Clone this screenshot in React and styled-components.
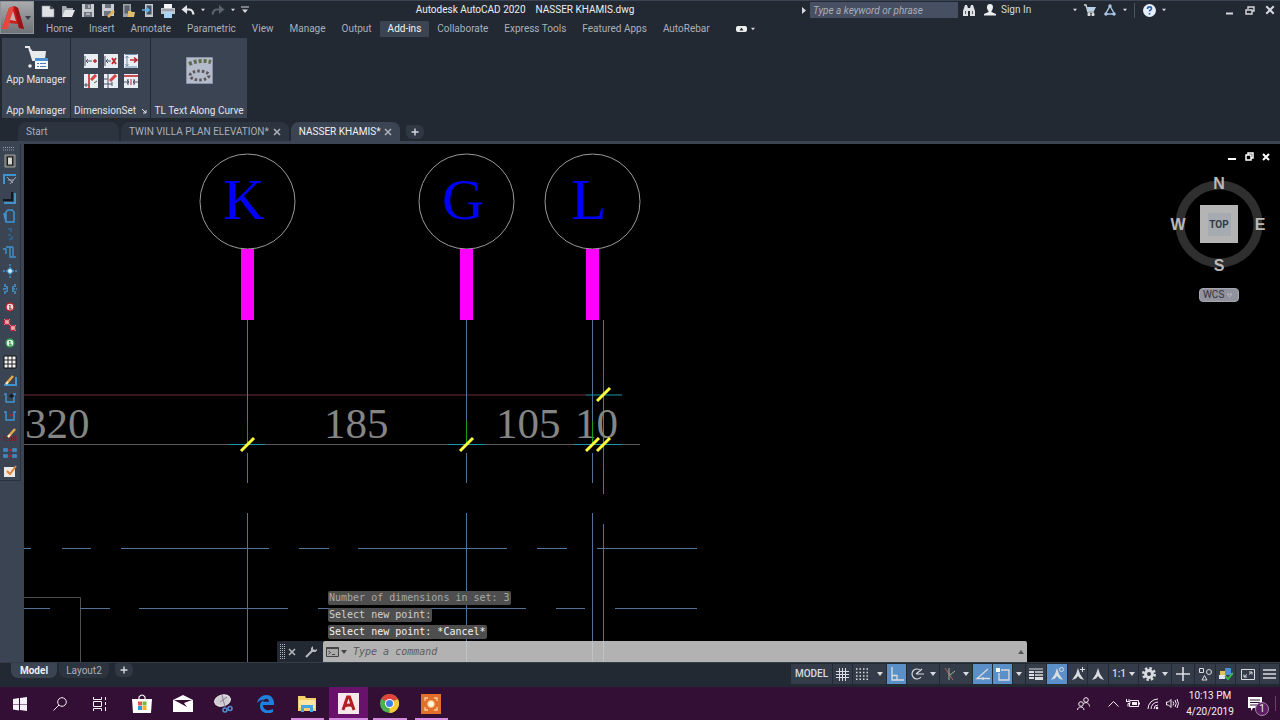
import styled, { createGlobalStyle } from "styled-components";

const GlobalStyle = createGlobalStyle`
  *, *::before, *::after {
    box-sizing: border-box;
  }
  body {
    margin: 0;
    background: #222933;
    color: #d5d8dc;
    font-family: Roboto, "Open Sans", sans-serif;
    font-size: 10px;
    line-height: 14px;
  }
  button, input {
    font: inherit;
    color: inherit;
    margin: 0;
    padding: 0;
    border: none;
    background: none;
  }
  svg {
    display: block;
    flex: none;
  }
`;

const Page = styled.div`
  min-height: 100vh;
  display: flex;
  flex-direction: column;
`;

/* ---------- header ---------- */

const Header = styled.header`
  display: grid;
  grid-template-columns: 34px minmax(0, 1fr);
  column-gap: 4px;
  border-top: 1px solid #3b4453;
`;

const AppButton = styled.button`
  grid-row: span 2;
  height: 33px;
  display: flex;
  align-items: center;
  background: linear-gradient(#a9abad, #6f7276);
  border: 1px solid #8f9296;
  color: #3a3f47;
`;

const TitleBar = styled.div`
  display: flex;
  align-items: center;
  height: 18px;
`;

const Group = styled.div`
  display: flex;
  align-items: center;
`;

const ToolButton = styled.button`
  display: flex;
  align-items: center;
  justify-content: center;
  width: ${(p) => p.$w || 20}px;
  height: 17px;
`;

const Title = styled.h1`
  flex: 1;
  margin: 0;
  font-size: 10px;
  font-weight: 400;
  text-align: center;
  white-space: pre;
  color: #eceef0;
`;

const Search = styled.input`
  width: 148px;
  height: 16px;
  padding: 0 3px;
  background: #474f63;
  &::placeholder {
    color: #a9aeb8;
    font-style: italic;
    opacity: 1;
  }
`;

const SignIn = styled.button`
  display: flex;
  align-items: center;
  gap: 5px;
  width: 101px;
  padding: 0 3px 0 5px;
  svg:last-child {
    margin-left: auto;
  }
`;

const Divider = styled.span`
  width: 1px;
  height: 15px;
  margin: 0 4px;
  background: #4b5361;
`;

const WindowButtons = styled(Group)`
  margin-left: 51px;
`;

const Tabs = styled.nav`
  display: flex;
  align-items: center;
  height: 19px;
`;

const Tab = styled.button`
  height: 16px;
  padding: 0 8px;
  border-radius: 1px;
  white-space: nowrap;
  color: ${(p) => (p.$active ? "#f2f4f6" : "#abb0b8")};
  background: ${(p) => (p.$active ? "#3b4453" : "none")};
`;

const RibbonToggle = styled.button`
  display: flex;
  align-items: center;
  gap: 4px;
  margin-left: 18px;
`;

/* ---------- ribbon ---------- */

const Ribbon = styled.section`
  display: flex;
  gap: 1px;
  height: 80px;
  padding-left: 2px;
`;

const Panel = styled.div`
  display: flex;
  flex-direction: column;
  align-items: center;
  min-width: ${(p) => p.$w}px;
  background: #3b4453;
  color: #e2e4e7;
`;

const PanelBody = styled.div`
  flex: 1;
  display: flex;
  align-items: center;
  justify-content: center;
`;

const PanelLabel = styled.div`
  display: flex;
  align-items: center;
  gap: 5px;
  height: 15px;
  white-space: nowrap;
`;

const BigButton = styled.button`
  display: flex;
  flex-direction: column;
  align-items: center;
  gap: 3px;
  padding-bottom: 8px;
  white-space: nowrap;
`;

const SmallGrid = styled.div`
  display: grid;
  grid-template-columns: repeat(3, 14px);
  gap: 6px;
`;

/* ---------- file tabs ---------- */

const FileTabs = styled.nav`
  display: flex;
  align-items: flex-end;
  gap: 2px;
  height: 26px;
  padding: 0 18px;
  border-bottom: 3px solid #3b4453;
`;

const FileTab = styled.div`
  display: flex;
  align-items: center;
  gap: 4px;
  height: 19px;
  min-width: ${(p) => p.$w || 18}px;
  padding: 0 8px;
  border-radius: 8px 8px 0 0;
  white-space: nowrap;
  color: ${(p) => (p.$active ? "#f0f2f4" : "#abb0b8")};
  background: ${(p) => (p.$active ? "#3b4453" : "#2c343f")};
  button {
    display: flex;
    align-items: center;
    margin-left: auto;
    color: #abb0b8;
  }
`;

const NewTab = styled.button`
  display: flex;
  align-items: center;
  justify-content: center;
  width: 18px;
  height: 14px;
  margin: 0 0 2px 4px;
  border-radius: 3px 6px 6px 6px;
  background: #303844;
`;

/* ---------- workspace ---------- */

const Workspace = styled.main`
  flex: 1;
  display: flex;
  min-height: 0;
`;

const Palette = styled.aside`
  width: 24px;
  background: #3b4453;
`;

const PaletteBar = styled.div`
  width: 21px;
  padding-top: 3px;
  border-right: 1px solid #2b323e;
  border-bottom: 1px solid #2b323e;
`;

const PaletteTools = styled.div`
  display: grid;
  grid-auto-rows: 1fr;
  height: 310px;
`;

const PaletteButton = styled.button`
  width: 20px;
  min-height: 18px;
  display: flex;
  align-items: center;
  justify-content: center;
`;

const Canvas = styled.div`
  flex: 1;
  display: grid;
  grid-template: minmax(0, 1fr) / minmax(0, 1fr);
  min-width: 0;
  background: #000;
  > * {
    grid-area: 1 / 1;
  }
`;

const Drawing = styled.svg`
  width: 100%;
  height: 100%;
  font-family: "Liberation Serif", serif;
`;

const ViewTools = styled.div`
  justify-self: end;
  align-self: start;
  display: flex;
  flex-direction: column;
  align-items: flex-end;
  padding: 4px 6px 0 0;
`;

const CubeBox = styled.div`
  padding: 10px 6px 0 0;
`;

const WcsButton = styled.button`
  display: flex;
  align-items: center;
  justify-content: space-between;
  width: 40px;
  height: 14px;
  margin: 13px 35px 0 0;
  padding: 0 5px 0 3px;
  border-radius: 4px;
  background: #92929f;
  border: 1px solid #a5a5b0;
  color: #33333c;
`;

const CommandArea = styled.div`
  justify-self: center;
  align-self: end;
  width: 60%;
  max-width: 750px;
  font-family: "DejaVu Sans Mono", "Liberation Mono", monospace;
`;

const History = styled.div`
  display: flex;
  flex-direction: column;
  align-items: flex-start;
  gap: 3px;
  margin: 0 0 2px 51px;
`;

const HistoryLine = styled.span`
  padding: 0 1px;
  border-radius: 2px;
  background: #4e4e4e;
  color: ${(p) => p.$color};
`;

const CommandBar = styled.div`
  display: flex;
  height: 21px;
`;

const CommandTools = styled.div`
  display: flex;
  align-items: center;
  gap: 2px;
  width: 46px;
  padding-left: 3px;
  background: #222933;
  border-radius: 2px 0 0 0;
  color: #b4b8be;
`;

const CommandButtons = styled(Group)`
  gap: 4px;
`;

const CommandBox = styled.label`
  flex: 1;
  display: flex;
  align-items: center;
  gap: 5px;
  padding: 0 3px;
  background: rgba(209, 209, 209, 0.85);
  border-radius: 2px 2px 0 0;
  input {
    flex: 1;
    color: #333;
  }
  input::placeholder {
    color: #5c5c5c;
    font-style: italic;
    opacity: 1;
  }
`;

/* ---------- status bar ---------- */

const StatusBar = styled.footer`
  display: flex;
  justify-content: space-between;
  height: 25px;
  border-top: 1px solid #343c48;
`;

const LayoutTabs = styled.nav`
  display: flex;
  align-items: flex-start;
  gap: 2px;
  padding-left: 11px;
`;

const LayoutTab = styled.button`
  height: 15px;
  min-width: ${(p) => (p.$active ? 46 : 50)}px;
  border-radius: 0 0 7px 7px;
  font-weight: ${(p) => (p.$active ? 700 : 400)};
  color: ${(p) => (p.$active ? "#f0f2f4" : "#abb0b8")};
  background: ${(p) => (p.$active ? "#3b4453" : "#2c343f")};
`;

const StatusTools = styled.div`
  display: flex;
  align-items: flex-start;
  gap: 1px;
  padding: 1px 1px 0 0;
`;

const StatusButton = styled.button`
  display: flex;
  align-items: center;
  justify-content: ${(p) => (p.$spread ? "space-between" : "center")};
  width: ${(p) => p.$w || 19}px;
  height: 20px;
  padding: 0 ${(p) => (p.$spread ? 3 : 0)}px;
  font-weight: 500;
  color: #d9dce0;
  background: ${(p) => (p.$on ? "#5b8fc7" : "#343c49")};
`;

/* ---------- taskbar ---------- */

const Taskbar = styled.footer`
  display: flex;
  justify-content: space-between;
  height: 33px;
  background: #330f36;
  color: #f4eef4;
`;

const SystemButton = styled.button`
  width: 40px;
  height: 33px;
  display: flex;
  align-items: center;
  justify-content: center;
`;

const Apps = styled.div`
  display: grid;
  grid-template-columns: repeat(8, 1fr);
  width: 331px;
  margin-left: 1px;
`;

const AppTile = styled.button`
  display: flex;
  align-items: center;
  justify-content: center;
  margin: 0 ${(p) => (p.$active ? 1 : 4)}px;
  height: 33px;
  border-top: 2px solid transparent;
  border-bottom: 2px solid ${(p) => (p.$open ? "#d48be0" : "transparent")};
  background: ${(p) => (p.$active ? "#68126c" : "none")};
`;

const Tray = styled.div`
  display: flex;
  align-items: center;
`;

const TrayButton = styled.button`
  width: ${(p) => p.$w || 20}px;
  height: 33px;
  display: flex;
  align-items: center;
  justify-content: center;
`;

const Clock = styled.time`
  width: 58px;
  text-align: center;
  line-height: 16px;
`;

const Notify = styled.button`
  position: relative;
  width: 32px;
  height: 33px;
  display: flex;
  align-items: center;
  justify-content: center;
`;

const Badge = styled.span`
  position: absolute;
  right: 2px;
  bottom: 4px;
  width: 14px;
  height: 14px;
  border-radius: 50%;
  border: 1px solid #a98bab;
  background: #5c1c63;
  line-height: 12px;
`;

/* ---------- icons ---------- */

function Icon({ w = 16, h = w, box, children, ...rest }) {
  return (
    <svg
      width={w}
      height={h}
      viewBox={box || `0 0 ${w} ${h}`}
      fill="none"
      stroke="currentColor"
      aria-hidden="true"
      {...rest}
    >
      {children}
    </svg>
  );
}

const Caret = ({ w = 6 }) => (
  <Icon w={w} h={4} box="0 0 6 4">
    <path d="M0 0h6L3 4z" fill="currentColor" stroke="none" />
  </Icon>
);

const Cross = ({ w = 8 }) => (
  <Icon w={w} box="0 0 8 8" strokeWidth="1.6">
    <path d="M1 1l6 6M7 1L1 7" />
  </Icon>
);

const Plus = () => (
  <Icon w={8} strokeWidth="1.4">
    <path d="M4 .5v7M.5 4h7" />
  </Icon>
);

const quickAccess = [
  [
    "New",
    <path d="M1 3h8l4 3v8H1z M9 3v3h4" fill="#dfe1e4" stroke="#8d939c" strokeWidth=".6" />,
  ],
  [
    "Open",
    <>
      <path d="M1 13V3h4l1 2h6v3" fill="#a2a7af" stroke="none" />
      <path d="M4 7h10l-3 7H1z" fill="#e3e5e8" stroke="none" />
    </>,
  ],
  [
    "Save",
    <>
      <path d="M1 1h12v13H1z" fill="#c9ccd1" stroke="none" />
      <path d="M4 1h6v5H4zM3 9h8v5H3z" fill="#6d7580" stroke="none" />
      <path d="M8 2v3M5 11h4" stroke="#eceef0" />
    </>,
  ],
  [
    "Save as",
    <>
      <path d="M1 1h12v12H1z" fill="#c9ccd1" stroke="none" />
      <path d="M4 1h6v4H4zM3 8h7v5H3z" fill="#6d7580" stroke="none" />
      <path d="M7 14l6-6" stroke="#e0b25c" strokeWidth="2.500" />
    </>,
  ],
  [
    "Open from web",
    <>
      <path d="M2 1h8v13H2z" fill="#9da3ab" stroke="none" />
      <path d="M3.500 2.500h5v8h-5z" fill="#59616d" stroke="none" />
      <path d="M7 14V8h3l1 1h3l-1 5z" fill="#e0bd6e" stroke="none" />
    </>,
  ],
  [
    "Save to web",
    <>
      <path d="M4 1h8v13H4z" fill="#c2c7ce" stroke="none" />
      <path d="M5.500 2.500h5v9h-5z" fill="#45505f" stroke="none" />
      <path d="M1 7h7M5.500 4.500L8 7 5.500 9.500" stroke="#5fb2ec" strokeWidth="1.600" />
    </>,
  ],
  [
    "Plot",
    <>
      <path d="M3 1h8v4H3z" fill="#f4f5f6" stroke="none" />
      <path d="M0 5h14v6H0z" fill="#c3c7cc" stroke="none" />
      <path d="M3 9h8v6H3z" fill="#a9d4f5" stroke="none" />
      <path d="M1 7h12" stroke="#727a86" />
    </>,
  ],
];

const Undo = ({ color, flip }) => (
  <Icon w={14} h={12} color={color} strokeWidth="2.200">
    <g transform={flip ? "translate(14 0) scale(-1 1)" : undefined}>
      <path d="M4 5.500h4c3 0 4 2 4.500 5" />
      <path d="M6 1v9L.5 5.500z" fill="currentColor" stroke="none" />
    </g>
  </Icon>
);

const AutocadLogo = ({ w, h }) => (
  <Icon w={w} h={h} box="0 0 24 26" stroke="none">
    <path d="M1 24L8 3l5-2 4 2 6 21-5-1-1-4-9-1-2 5z" fill="#c8201f" />
    <path d="M1 24L8 3l5-2-6 23z" fill="#e8473f" />
    <path d="M13 1l4 2 6 21-5-1z" fill="#9d1214" />
    <path d="M9 15l3-9 3 10z" fill="#c9b3b2" />
  </Icon>
);

const dimIcons = [
  ["Add dimension", <><path d="M1 2v10M2 7h6M4 5L2 7l2 2" stroke="#4a5566" /><path d="M9 7h4M11 5v4" stroke="#c1272d" strokeWidth="1.400" /></>],
  ["Delete dimension", <><path d="M1 2v10M2 7h5M4 5L2 7l2 2" stroke="#4a5566" /><path d="M8 4l4 6M12 4l-4 6" stroke="#c1272d" strokeWidth="1.800" /></>],
  ["Move dimension", <><path d="M3 2v10M1.500 4L3 2l1.500 2M1.500 10L3 12l1.500-2M1 .5h12M1 13h12" stroke="#6f8fae" /><path d="M6 6h7M10 3.500L13 6l-3 2.500" stroke="#c1272d" strokeWidth="1.600" /></>],
  ["Edit line", <><path d="M5 0v14" stroke="#c1272d" strokeWidth="1.600" /><path d="M0 11h5M10 9l3-2M2 9v4" stroke="#4a5566" /><path d="M7 6l5-5" stroke="#d64545" strokeWidth="3" /></>],
  ["Edit text", <><path d="M4 0v14M0 5h4M0 10h8M8 8v4" stroke="#4a5566" /><path d="M6 7l6-6" stroke="#d64545" strokeWidth="3" /></>],
  ["Align", <><path d="M0 2h14" stroke="#c1272d" strokeWidth="1.600" /><path d="M0 8h5M9 8h5M4 5v6M10 5v6M3 6L5 8 3 10M11 6L9 8l2 2" stroke="#4a5566" /><path d="M7 5v6" stroke="#c1272d" /></>],
];

const blue = "#3f93cf";
const paletteIcons = [
  ["Block", <><path d="M2 1h10v12H2z" fill="#55585c" stroke="#a3a39c" /><path d="M4.500 3h5v8h-5z" fill="#d4d4cc" stroke="#16181c" /></>],
  ["Trim", <><path d="M1 12V3h12" stroke={blue} strokeWidth="2" /><path d="M4 5l6 6M13 5L7 12M5 8h6" stroke="#9aa7b4" /></>],
  ["Corner", <><path d="M1 12h11V2" stroke={blue} strokeWidth="2" /><path d="M0 9h9V1" stroke="#131820" strokeWidth="2" /></>],
  ["Closed link", <path d="M3 12V3l2-2h4l2 2v10H3L1 5l2-1" stroke={blue} strokeWidth="1.500" />],
  ["Spacer", <path d="M5 2h3v3M5 8h3M6 12h3V9" stroke="#2c699c" strokeWidth="1.300" />],
  ["Stirrup", <path d="M0 4h3v5M3 2h4v10h6M10 2v9M7 2h3" stroke={blue} strokeWidth="1.400" />],
  ["Center", <><path d="M7 0v14M0 7h14" stroke={blue} strokeWidth="1.500" strokeDasharray="2 1" /><circle cx="7" cy="7" r="2.500" fill="#cdeefa" stroke={blue} /></>],
  ["Spread", <path d="M2 2v3M2 9v3M12 2v3M12 9v3M0 7h5M9 7h5M4 4v6M10 4v6" stroke={blue} strokeWidth="1.600" strokeDasharray="3 1" />],
  ["Mark", <><circle cx="7" cy="7" r="4" fill="#f3dede" stroke="#b3202f" strokeWidth="1.500" /><path d="M6 6l1-1v4M6 9h3" stroke="#b3202f" /></>],
  ["Multi mark", <><circle cx="4" cy="4" r="2.500" fill="#f3dede" stroke="#c22e3f" strokeWidth="1.500" /><circle cx="10" cy="10" r="2.500" fill="#f3dede" stroke="#c22e3f" strokeWidth="1.500" /><path d="M1 1l6 6M7 1L1 7M7 7l6 6M8 12l5-5" stroke="#e8a0a8" strokeWidth=".8" /></>],
  ["Update mark", <><circle cx="7" cy="7" r="4" fill="#e3f5e6" stroke="#2d9a50" strokeWidth="1.500" /><path d="M6 6l1-1v4M6 9h3" stroke="#2d7a40" /></>],
  ["Table", <><path d="M1 1h12v12H1z" fill="#f2f2f2" stroke="#111" /><path d="M1 5h12M1 9h12M5 1v12M9 1v12" stroke="#222" /></>],
  ["Edit bar", <><path d="M1 12h12V4" stroke={blue} strokeWidth="2" /><path d="M3 11l7-8" stroke="#e8a849" strokeWidth="2.500" /><path d="M3 11l2-2" stroke="#f6ecd8" strokeWidth="2" /></>],
  ["Add leg", <><path d="M1 3h2v8h8V3h2" stroke={blue} strokeWidth="1.500" /><path d="M6 5h5M8.500 3v4" stroke="#131820" strokeWidth="1.500" /></>],
  ["Remove leg", <><path d="M1 3h2v8h8V3h2" stroke={blue} strokeWidth="1.500" /><path d="M6 6h4" stroke="#b3202f" strokeWidth="1.500" /></>],
  ["Scale", <><text x="0" y="13" fill="#8e1522" stroke="none" fontSize="7" fontWeight="700">1:50</text><path d="M5 9l7-8" stroke="#e8a849" strokeWidth="2.500" /><path d="M5 9l2-2" stroke="#f6ecd8" strokeWidth="2" /></>],
  ["Group", <><path d="M1 3h3v2H1zM10 3h3v2h-3zM1 9h3v2H1zM10 9h3v2h-3z" stroke={blue} strokeWidth="1.500" /><path d="M5.500 4h3M5.500 10h3" stroke="#b3202f" strokeWidth="2" /></>],
];

function ViewCube() {
  return (
    <Icon w={98} h={100} fontFamily="Liberation Sans" fontWeight="700" textAnchor="middle">
      <circle cx="49" cy="49" r="39" stroke="#2f2f2f" strokeWidth="9" />
      <g fill="#b9b9b9" stroke="none" fontSize="16">
        <text x="49" y="14">N</text>
        <text x="49" y="96">S</text>
        <text x="8" y="55">W</text>
        <text x="90" y="55">E</text>
      </g>
      <path d="M30 30h38v38H30z" fill="#b4b4b4" stroke="none" />
      <path d="M38 38h23v23H38z" fill="#a5abb1" stroke="none" />
      <text x="49" y="53" fill="#333a44" stroke="none" fontSize="10" fontFamily="Roboto">
        TOP
      </text>
    </Icon>
  );
}

/* ---------- drawing data ---------- */

const axes = [
  { label: "K", x: 223.5, textX: 199 },
  { label: "G", x: 442.5, textX: 418 },
  { label: "L", x: 568.5, textX: 547 },
];

const dims = [
  { value: "320", x: 1 },
  { value: "185", x: 300 },
  { value: "105", x: 472 },
  { value: "10", x: 551 },
];

const dashes = [
  { y: 404, runs: [[0, 7], [38, 67], [97, 245], [275, 305], [334, 483], [513, 543], [573, 673]] },
  { y: 464, runs: [[0, 26], [56, 86], [115, 264], [294, 323], [353, 502], [532, 561], [591, 673]] },
];

const slashes = [[223, 301], [442, 301], [568, 301], [579, 301], [579, 251]];

function Plan() {
  return (
    <Drawing role="img" aria-label="Grid axes and dimensions">
      <g stroke="#4f4f4f" fill="none">
        <path d="M0 300.5h616" stroke="#5a5a5a" />
        <path d="M0 453.500h56.500V2000" />
        <path d="M0 251h562" stroke="#6b3038" />
      </g>
      <g stroke="#4f7296">
        {dashes.map((row) =>
          row.runs.map(([from, to]) => (
            <line key={row.y + "-" + from} x1={from} x2={to} y1={row.y + 0.5} y2={row.y + 0.5} />
          ))
        )}
        {axes.map((a) => (
          <path key={a.label} d={`M${a.x} 176v122M${a.x} 309v30M${a.x} 369V2000`} />
        ))}
        <path d="M579.5 176v174M579.5 380V2000" />
      </g>
      <g fill="#858585" fontSize="43">
        {dims.map((d) => (
          <text key={d.value} x={d.x} y="294">
            {d.value}
          </text>
        ))}
      </g>
      <g stroke="#12a012">
        {axes.map((a) => (
          <path key={a.label} d={`M${a.x} 277v22`} />
        ))}
        <path d="M579.5 227v22M579.5 303v22" />
      </g>
      <path
        d="M205 300.5h36M424 300.5h37M550 300.5h48M562 251h36"
        stroke="#1c97a6"
      />
      {slashes.map(([x, y]) => (
        <path
          key={x + "-" + y}
          d={`M${x - 6} ${y + 6}l13-13`}
          stroke="#ffff3a"
          strokeWidth="3"
        />
      ))}
      {axes.map((a) => (
        <g key={a.label}>
          <circle cx={a.x} cy="57.5" r="47.5" fill="none" stroke="#9a9a9a" />
          <rect x={a.x - 6.5} y="105" width="13" height="71" fill="#ff00ff" />
          <text x={a.textX} y="75" fontSize="58" fill="#0000fa">
            {a.label}
          </text>
        </g>
      ))}
    </Drawing>
  );
}

const menu = [
  "Home",
  "Insert",
  "Annotate",
  "Parametric",
  "View",
  "Manage",
  "Output",
  "Add-ins",
  "Collaborate",
  "Express Tools",
  "Featured Apps",
  "AutoRebar",
];

const CompassA = ({ children }) => (
  <Icon w={14}>
    <path d="M7 1l2 6 4 6-4-1.500L7 9l-2 2.500L1 13l4-6z" fill="currentColor" stroke="none" />
    {children}
  </Icon>
);

export default function App() {
  return (
    <Page>
      <GlobalStyle />
      <Header>
        <AppButton aria-label="Application menu">
          <AutocadLogo w={24} h={26} />
          <Caret />
        </AppButton>
        <TitleBar>
          <Group>
            {quickAccess.map(([name, art]) => (
              <ToolButton key={name} aria-label={name}>
                <Icon w={14} h={15}>
                  {art}
                </Icon>
              </ToolButton>
            ))}
            <ToolButton aria-label="Undo">
              <Undo color="#e3e5e8" />
            </ToolButton>
            <ToolButton $w={10} aria-label="Undo list">
              <Caret w={4} />
            </ToolButton>
            <ToolButton aria-label="Redo">
              <Undo color="#5a626e" flip />
            </ToolButton>
            <ToolButton $w={10} aria-label="Redo list">
              <Caret w={4} />
            </ToolButton>
            <ToolButton $w={14} aria-label="Customize">
              <Icon w={8}>
                <path d="M0 1h8" />
                <path d="M1 3.500h6L4 7z" fill="currentColor" stroke="none" />
              </Icon>
            </ToolButton>
          </Group>
          <Title>{"Autodesk AutoCAD 2020    NASSER KHAMIS.dwg"}</Title>
          <Group>
            <ToolButton $w={12} aria-label="Expand search">
              <Icon w={4} h={7}>
                <path d="M0 0v7l4-3.500z" fill="currentColor" stroke="none" />
              </Icon>
            </ToolButton>
            <Search aria-label="Search" placeholder="Type a keyword or phrase" />
            <ToolButton $w={21} aria-label="Find">
              <Icon w={12} h={11}>
                <path d="M1 3l1-3h2l1 3v8H0V6zM7 3l1-3h2l1 3 1 3v5H7zM5 3h2v3H5z" fill="#dfe1e4" stroke="none" />
                <path d="M2.500 6v3M9.500 6v3" stroke="#59616d" />
              </Icon>
            </ToolButton>
            <SignIn>
              <Icon w={12}>
                <path d="M6 0c4 0 3.500 5 1.500 7v1L12 10v1.500H0V10l4.500-2V7C2.500 5 2 0 6 0z" fill="#eceef0" stroke="none" />
              </Icon>
              Sign In
              <Caret w={4} />
            </SignIn>
            <ToolButton aria-label="App store">
              <Icon w={12} strokeWidth="1.300">
                <path d="M0 1h2l2 7h6" />
                <path d="M3 3h9l-2 4H4z" fill="#b9d0ea" stroke="none" />
                <circle cx="5" cy="10.500" r="1" fill="#fff" />
                <circle cx="9" cy="10.500" r="1" fill="#fff" />
              </Icon>
            </ToolButton>
            <ToolButton aria-label="Connected apps">
              <Icon w={12} strokeWidth="1.400" color="#a9c4e4">
                <path d="M6 2l4.500 8h-9z" />
                <circle cx="6" cy="2" r="1" fill="#fff" />
                <circle cx="2" cy="10" r="1" fill="#fff" />
                <circle cx="10" cy="10" r="1" fill="#fff" />
              </Icon>
            </ToolButton>
            <ToolButton $w={10} aria-label="Connected apps list">
              <Caret w={4} />
            </ToolButton>
            <Divider />
            <ToolButton aria-label="Help">
              <Icon w={13}>
                <circle cx="6.500" cy="6.500" r="6.500" fill="#e6effa" stroke="none" />
                <path d="M4.500 5c0-3 4-2.500 4-.5 0 1.500-2 1.500-2 3M6.500 9v1.500" stroke="#2b5fa5" strokeWidth="1.600" />
              </Icon>
            </ToolButton>
            <ToolButton $w={10} aria-label="Help list">
              <Caret w={4} />
            </ToolButton>
            <WindowButtons>
              <ToolButton aria-label="Minimize">
                <Icon w={8} h={10}>
                  <path d="M0 8.500h7" strokeWidth="2" />
                </Icon>
              </ToolButton>
              <ToolButton aria-label="Restore">
                <Icon w={10} h={9} strokeWidth="1.400">
                  <path d="M3 3V1h6v4H7M1 4h6v4H1z" />
                </Icon>
              </ToolButton>
              <ToolButton aria-label="Close">
                <Cross w={10} />
              </ToolButton>
            </WindowButtons>
          </Group>
        </TitleBar>
        <Tabs>
          {menu.map((name) => (
            <Tab key={name} $active={name === "Add-ins"}>
              {name}
            </Tab>
          ))}
          <RibbonToggle aria-label="Minimize ribbon">
            <Icon w={11} h={6} stroke="none">
              <rect width="11" height="6" rx="2" fill="#eceef0" />
              <path d="M3.500 4.500h4l-2-3z" fill="#222933" />
            </Icon>
            <Caret w={4} />
          </RibbonToggle>
        </Tabs>
      </Header>

      <Ribbon>
        <Panel $w={68}>
          <PanelBody>
            <BigButton>
              <Icon w={24}>
                <path d="M1 1h4l4 13h12M5 4l3 1" stroke="#e8eaec" strokeWidth="2" />
                <path d="M6 5h16l-1 9H9z" fill="#e8eaec" stroke="none" />
                <circle cx="6" cy="20" r="1.800" fill="#e8eaec" stroke="none" />
                <path d="M11 12h13v11H11z" fill="#f4f8fc" stroke="none" />
                <path d="M11 13.500h13" stroke="#4a90d0" strokeWidth="3" />
                <path d="M13 17.500h2M16 17.500h6M13 20.500h2M16 20.500h6" stroke="#4a80b0" />
              </Icon>
              App Manager
            </BigButton>
          </PanelBody>
          <PanelLabel>App Manager</PanelLabel>
        </Panel>
        <Panel $w={79}>
          <PanelBody>
            <SmallGrid>
              {dimIcons.map(([name, art]) => (
                <button key={name} aria-label={name}>
                  <Icon w={14}>
                    <path d="M0 0h14v14H0z" fill="#e9edf4" stroke="none" />
                    {art}
                  </Icon>
                </button>
              ))}
            </SmallGrid>
          </PanelBody>
          <PanelLabel>
            DimensionSet
            <Icon w={6}>
              <path d="M1 1l4 4M5 2v3H2" />
            </Icon>
          </PanelLabel>
        </Panel>
        <Panel $w={96}>
          <PanelBody>
            <button aria-label="TL Text Along Curve tool">
              <Icon w={27}>
                <path d="M.5 .5h26v26H.5z" fill="#b4bccb" stroke="#8993a5" />
                <path d="M3 7q11-5 22-2" stroke="#606a4c" strokeWidth="4" strokeDasharray="3 2" />
                <ellipse cx="13.500" cy="18.500" rx="9.500" ry="4.500" stroke="#5d5658" strokeWidth="3" strokeDasharray="2.500 2" />
              </Icon>
            </button>
          </PanelBody>
          <PanelLabel>TL Text Along Curve</PanelLabel>
        </Panel>
      </Ribbon>

      <FileTabs>
        <FileTab $w={101}>Start</FileTab>
        <FileTab $w={167}>
          TWIN VILLA PLAN ELEVATION*
          <button aria-label="Close TWIN VILLA PLAN ELEVATION">
            <Cross />
          </button>
        </FileTab>
        <FileTab $active $w={105}>
          NASSER KHAMIS*
          <button aria-label="Close NASSER KHAMIS">
            <Cross />
          </button>
        </FileTab>
        <NewTab aria-label="New drawing">
          <Plus />
        </NewTab>
      </FileTabs>

      <Workspace>
        <Palette>
          <PaletteBar>
            <Icon w={20} h={5}>
              <path d="M3 .5h11M3 3h11" stroke="#9aa0aa" strokeDasharray="1 1" />
            </Icon>
            <PaletteTools>
              {paletteIcons.map(([name, art]) => (
                <PaletteButton key={name} aria-label={name}>
                  <Icon w={14}>{art}</Icon>
                </PaletteButton>
              ))}
            </PaletteTools>
            <PaletteButton aria-label="Check">
              <Icon w={14}>
                <path d="M1 3h11v10H1z" fill="#eceae6" stroke="none" />
                <path d="M4 7l3 3 6-8" stroke="#e08236" strokeWidth="2" />
              </Icon>
            </PaletteButton>
          </PaletteBar>
        </Palette>
        <Canvas>
          <Plan />
          <ViewTools>
            <Group>
              <ToolButton $w={17} aria-label="Minimize drawing">
                <Icon w={9} color="#fff">
                  <path d="M0 7h8" strokeWidth="2" />
                </Icon>
              </ToolButton>
              <ToolButton $w={17} aria-label="Restore drawing">
                <Icon w={9} color="#fff" strokeWidth="1.500">
                  <path d="M3 3V1h5v5H6M1 3h5v5H1z" />
                </Icon>
              </ToolButton>
              <ToolButton $w={16} aria-label="Close drawing">
                <Icon w={8} color="#fff" strokeWidth="2">
                  <path d="M1 1l6 6M7 1L1 7" />
                </Icon>
              </ToolButton>
            </Group>
            <CubeBox>
              <ViewCube />
            </CubeBox>
            <WcsButton>
              WCS
              <Icon w={7} h={5}>
                <path d="M1 1h5L3.500 4z" stroke="#b5b5c0" />
              </Icon>
            </WcsButton>
          </ViewTools>
          <CommandArea>
            <History>
              <HistoryLine $color="#a8a8a8">Number of dimensions in set: 3</HistoryLine>
              <HistoryLine $color="#d0d0d0">Select new point:</HistoryLine>
              <HistoryLine $color="#f2f2f2">Select new point: *Cancel*</HistoryLine>
            </History>
            <CommandBar>
              <CommandTools>
                <Icon w={5} h={15}>
                  <path d="M.5 0v15M2.500 0v15M4.500 0v15" strokeDasharray="1 1" />
                </Icon>
                <CommandButtons>
                  <ToolButton $w={10} aria-label="Close command line">
                    <Cross />
                  </ToolButton>
                  <ToolButton aria-label="Customize command line">
                    <Icon w={12}>
                      <path d="M1 11l6-6" strokeWidth="2.200" />
                      <path d="M8 0L6 2v3l1 1h3.500L12 4.500V3L10 4 8 3z" fill="currentColor" stroke="none" />
                    </Icon>
                  </ToolButton>
                </CommandButtons>
              </CommandTools>
              <CommandBox>
                <Icon w={22} h={12} color="#444">
                  <path d="M.5 1.500h12v9H.5z" fill="#a9a9a9" />
                  <path d="M.5 2h12" strokeWidth="2" />
                  <path d="M2.500 5l2 1.500-2 1.500M6 8.500h3" />
                  <path d="M15 4h6l-3 4z" fill="#444" stroke="none" />
                </Icon>
                <input placeholder="Type a command" aria-label="Command" />
                <Icon w={6} h={4} color="#555">
                  <path d="M0 4h6L3 0z" fill="currentColor" stroke="none" />
                </Icon>
              </CommandBox>
            </CommandBar>
          </CommandArea>
        </Canvas>
      </Workspace>

      <StatusBar>
        <LayoutTabs>
          <LayoutTab $active>Model</LayoutTab>
          <LayoutTab>Layout2</LayoutTab>
          <NewTab aria-label="New layout">
            <Plus />
          </NewTab>
        </LayoutTabs>
        <StatusTools>
          <StatusButton $w={41}>MODEL</StatusButton>
          <StatusButton aria-label="Grid">
            <Icon w={13}>
              <path d="M3.500 0v13M6.500 0v13M9.500 0v13M0 3.500h13M0 6.500h13M0 9.500h13" />
            </Icon>
          </StatusButton>
          <StatusButton $w={33} $spread aria-label="Snap">
            <Icon w={12}>
              <path d="M0 1h12M0 4.500h12M0 8h12M0 11.200h12" strokeWidth="1.500" strokeDasharray="1.500 2" />
            </Icon>
            <Caret />
          </StatusButton>
          <StatusButton $on aria-label="Ortho">
            <Icon w={14} strokeWidth="1.300">
              <path d="M2 0v13h12M2 8.500h5V13" />
            </Icon>
          </StatusButton>
          <StatusButton $w={32} $spread aria-label="Polar tracking">
            <Icon w={14} strokeWidth="1.200">
              <path d="M11 4A5 5 0 1 0 11 10M6 7h8M6 7l6-5" />
            </Icon>
            <Caret />
          </StatusButton>
          <StatusButton $w={32} $spread aria-label="Isometric drafting">
            <Icon w={14}>
              <path d="M2 1l8 12" stroke="#b85d5d" />
              <path d="M6 1v12M7 8l5-4" stroke="#9fb59a" />
            </Icon>
            <Caret />
          </StatusButton>
          <StatusButton $on aria-label="Object snap tracking">
            <Icon w={15} h={14} strokeWidth="1.300">
              <path d="M13 2L2 11.500h13" />
              <path d="M8 10v3" />
            </Icon>
          </StatusButton>
          <StatusButton $on aria-label="Object snap">
            <Icon w={14} strokeWidth="1.300">
              <path d="M5 3h8v10H3V6" />
              <path d="M0 1h4v4H0z" fill="#fff" stroke="none" />
            </Icon>
          </StatusButton>
          <StatusButton $w={12} aria-label="Object snap list">
            <Caret />
          </StatusButton>
          <StatusButton $w={20} aria-label="Lineweight">
            <Icon w={14} h={12}>
              <path d="M0 1h14" />
              <path d="M0 4h5M0 7h5M0 10h5" strokeWidth="2" />
              <path d="M6 4h8M6 7h8" strokeWidth="1.500" />
              <path d="M6 10.500h8" strokeWidth="3" />
            </Icon>
          </StatusButton>
          <StatusButton $on $w={20} aria-label="Annotation visibility">
            <CompassA>
              <circle cx="11.500" cy="2.500" r="2" />
            </CompassA>
          </StatusButton>
          <StatusButton aria-label="Auto scale">
            <CompassA>
              <path d="M11.500 0v5M9 2.500h5" />
            </CompassA>
          </StatusButton>
          <StatusButton $w={20} aria-label="Annotation scale">
            <CompassA />
          </StatusButton>
          <StatusButton $w={29} $spread>
            1:1
            <Caret />
          </StatusButton>
          <StatusButton $w={32} $spread aria-label="Workspace">
            <Icon w={14}>
              <circle cx="7" cy="7" r="3.500" strokeWidth="3" />
              <circle cx="7" cy="7" r="5.800" strokeWidth="2.400" strokeDasharray="2.500 2" />
            </Icon>
            <Caret />
          </StatusButton>
          <StatusButton $w={22} aria-label="Annotation monitor">
            <Icon w={14} strokeWidth="1.600">
              <path d="M7 0v14M0 7h14" />
            </Icon>
          </StatusButton>
          <StatusButton $w={20} aria-label="Isolate objects">
            <Icon w={14}>
              <path d="M1.500 1.500h4v4h-4zM4 13l2.500-4.500L9 13z" />
              <circle cx="11" cy="5" r="2.500" />
            </Icon>
          </StatusButton>
          <StatusButton aria-label="Hardware acceleration">
            <Icon w={14} stroke="none">
              <path d="M1 4h6v7H1z" fill="#e8c05a" />
              <path d="M6 1h6v7H6z" fill="#4c8fd0" />
              <path d="M0 8h6v4H0z" fill="#dfe5ee" />
              <path d="M6 9l3 3 5-6" stroke="#3bb152" strokeWidth="2" />
            </Icon>
          </StatusButton>
          <StatusButton $w={23} aria-label="Clean screen">
            <Icon w={14} h={11}>
              <path d="M.5 .5h13v10H.5z" />
              <path d="M3 8l3-2.500M3 5.500V8h3M11 3L8 5.500M8 3h3v2.500" />
            </Icon>
          </StatusButton>
          <StatusButton aria-label="Customization">
            <Icon w={13} h={12} strokeWidth="1.600">
              <path d="M0 2h13M0 6h13M0 10h13" />
            </Icon>
          </StatusButton>
        </StatusTools>
      </StatusBar>

      <Taskbar>
        <Group>
          <SystemButton aria-label="Start">
            <Icon w={14} stroke="none">
              <path d="M0 2l6-1v6H0zM7 1l7-1v7H7zM0 7.600h6v6l-6-1zM7 7.600h7V14l-7-1z" fill="#f7f2f7" />
            </Icon>
          </SystemButton>
          <SystemButton aria-label="Search">
            <Icon w={14}>
              <circle cx="9" cy="5" r="4.300" />
              <path d="M6 8l-5.500 5.500" />
            </Icon>
          </SystemButton>
          <SystemButton aria-label="Task view">
            <Icon w={14}>
              <path d="M.5 0v2.500h8V0M.5 14v-2.500h8V14M.5 4.500h8v5h-8zM12.500 0v3M12.500 5v3M12.500 10v4" />
            </Icon>
          </SystemButton>
          <Apps>
            <AppTile aria-label="Microsoft Store">
              <Icon w={20} stroke="none">
                <path d="M7 5V3q3-4 6 0v2" stroke="#fff" strokeWidth="1.200" />
                <path d="M0 5h20l-1 14H1z" fill="#fff" />
                <path d="M6 7.500h4v4H6z" fill="#e2574c" />
                <path d="M10.500 7.500h4v4h-4z" fill="#7bb63c" />
                <path d="M6 12h4v4H6z" fill="#2f96d8" />
                <path d="M10.500 12h4v4h-4z" fill="#f0b429" />
              </Icon>
            </AppTile>
            <AppTile aria-label="Mail">
              <Icon w={20} h={17} stroke="none">
                <path d="M0 5l10-5 10 5v12H0z" fill="#fff" />
                <path d="M1 5h18l-8 3 3 4z" fill="#330f36" />
              </Icon>
            </AppTile>
            <AppTile aria-label="Snipping Tool">
              <Icon w={20}>
                <ellipse cx="8.500" cy="6.500" rx="8" ry="5.500" fill="#cfcbd3" stroke="#efecf1" transform="rotate(-15 8.500 6.500)" />
                <path d="M8 1l3 12M13 3l-7 5" stroke="#8a7f8f" />
                <circle cx="11" cy="16" r="2" stroke="#4a8fd6" strokeWidth="1.600" />
                <circle cx="16" cy="14.500" r="2" stroke="#4a8fd6" strokeWidth="1.600" />
              </Icon>
            </AppTile>
            <AppTile aria-label="Edge">
              <Icon w={18} stroke="none">
                <path
                  d="M0 8C1 3 5 0 9.500 0c5 0 8 4 7.500 10H6c0 6 7 6 10 4v3c-5 3-13 1-13-6 0-4 3-6 5-6.500C5 4.500 2 5.500 0 8zm6-1.300h6c0-4-5-4-6 0z"
                  fill="#1f7fdc"
                  fillRule="evenodd"
                />
              </Icon>
            </AppTile>
            <AppTile $open aria-label="File Explorer">
              <Icon w={18} h={16} stroke="none">
                <path d="M0 0h7l1 2h10v13H0z" fill="#f3cf6b" />
                <path d="M1 4h16v8H1z" fill="#fbe7a3" />
                <path d="M3 9h12v7h-3v-4H6v4H3z" fill="#43a7dc" />
              </Icon>
            </AppTile>
            <AppTile $open $active aria-label="AutoCAD">
              <Icon w={21}>
                <path d="M0 0h21v21H0z" fill="#f7e9e9" stroke="none" />
                <path d="M5 17L9.500 4h2L16 17M7 13q4-2 8 0" stroke="#b01f24" strokeWidth="3" />
              </Icon>
            </AppTile>
            <AppTile $open aria-label="Chrome">
              <Icon w={19} stroke="none">
                <circle cx="9.500" cy="9.500" r="9.500" fill="#4caf50" />
                <path d="M9.500 9.500L1.300 4.700A9.500 9.500 0 0 1 17.700 4.700z" fill="#e0443a" />
                <path d="M9.500 9.500L17.700 4.700A9.500 9.500 0 0 1 9.500 19z" fill="#fbc934" />
                <path d="M9.500 5h8.300" stroke="#e0443a" />
                <circle cx="9.500" cy="9.500" r="4.600" fill="#fff" />
                <circle cx="9.500" cy="9.500" r="3.500" fill="#3f7ee8" />
              </Icon>
            </AppTile>
            <AppTile $open aria-label="Recorder">
              <Icon w={20}>
                <path d="M0 0h20v20H0z" fill="#e2702b" stroke="none" />
                <path d="M4 7V4h3M13 4h3v3M16 13v3h-3M7 16H4v-3" stroke="#f9cfa4" strokeWidth="1.300" />
                <circle cx="10" cy="10" r="3.500" fill="#fff4dc" stroke="#f7b066" />
              </Icon>
            </AppTile>
          </Apps>
        </Group>
        <Tray>
          <TrayButton $w={40} aria-label="People">
            <Icon w={13}>
              <circle cx="9" cy="3" r="2.300" />
              <circle cx="4" cy="7" r="2.300" />
              <path d="M.5 13c0-4 6.500-4 6.500 0M6.500 6.500c3-2 6 0 6 3" />
            </Icon>
          </TrayButton>
          <TrayButton aria-label="Show hidden icons">
            <Icon w={11} h={6}>
              <path d="M.5 5.500l5-5 5 5" />
            </Icon>
          </TrayButton>
          <TrayButton aria-label="Battery">
            <Icon w={14} h={9}>
              <path d="M4 1.500h8.500v6H3.500V5M13.500 3.500v2" />
              <path d="M6 3h5v3H6z" fill="currentColor" stroke="none" />
              <path d="M.5 0v3M3 0v3M0 2.500h4v2H2v3" />
            </Icon>
          </TrayButton>
          <TrayButton aria-label="Wi-Fi">
            <Icon w={12}>
              <path d="M1 11A10 10 0 0 1 11 1M4 11a7 7 0 0 1 7-7M7 11a4 4 0 0 1 4-4" />
              <circle cx="10" cy="10" r="1.300" fill="currentColor" stroke="none" />
            </Icon>
          </TrayButton>
          <TrayButton $w={18} aria-label="Volume">
            <Icon w={13} h={11}>
              <path d="M.5 4v3h2L5 9.500v-8L2.500 4zM7 3.500q1.500 2 0 4M9 2q2.500 3.500 0 7M11 1q3 4.500 0 9" />
            </Icon>
          </TrayButton>
          <Clock>
            10:13 PM
            <br />
            4/20/2019
          </Clock>
          <Notify aria-label="Notifications">
            <Icon w={14} stroke="none">
              <path d="M0 0h14v11H5l-2 3v-3H0z" fill="#fff" />
              <path d="M2 3h10M2 5.500h10M2 8h7" stroke="#330f36" />
            </Icon>
            <Badge>1</Badge>
          </Notify>
          <Divider />
        </Tray>
      </Taskbar>
    </Page>
  );
}
